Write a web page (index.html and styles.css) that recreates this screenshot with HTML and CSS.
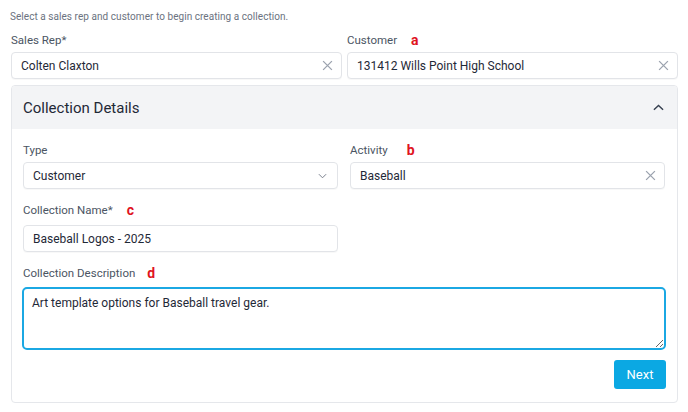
FILE: index.html
```html
<!DOCTYPE html>
<html>
<head>
<meta charset="utf-8">
<link rel="stylesheet" href="styles.css">
</head>
<body>
<div class="page">
  <p class="intro">Select a sales rep and customer to begin creating a collection.</p>
  <div class="top-row">
    <div class="field">
      <label class="label">Sales Rep*</label>
      <div class="input">
        <span class="value">Colten Claxton</span>
        <svg class="clear" viewBox="0 0 10 10" width="11" height="11"><path d="M1 1L9 9M9 1L1 9" stroke="#9ca3af" stroke-width="1.2" fill="none"/></svg>
      </div>
    </div>
    <div class="field">
      <label class="label">Customer<span class="mark mark-a">a</span></label>
      <div class="input">
        <span class="value">131412 Wills Point High School</span>
        <svg class="clear" viewBox="0 0 10 10" width="11" height="11"><path d="M1 1L9 9M9 1L1 9" stroke="#9ca3af" stroke-width="1.2" fill="none"/></svg>
      </div>
    </div>
  </div>

  <section class="panel">
    <header class="panel-head">
      <h2 class="panel-title">Collection Details</h2>
      <svg class="chev-up" viewBox="0 0 12 7" width="11" height="7"><path d="M1 6L6 1.3L11 6" stroke="#374151" stroke-width="1.6" fill="none"/></svg>
    </header>
    <div class="panel-body">
      <div class="grid">
        <div class="field">
          <label class="label">Type</label>
          <div class="input">
            <span class="value">Customer</span>
            <svg class="chev-down" viewBox="0 0 10 6" width="9" height="6"><path d="M1 1L5 5L9 1" stroke="#6b7280" stroke-width="1" fill="none"/></svg>
          </div>
        </div>
        <div class="field">
          <label class="label">Activity<span class="mark mark-b">b</span></label>
          <div class="input">
            <span class="value">Baseball</span>
            <svg class="clear" viewBox="0 0 10 10" width="11" height="11"><path d="M1 1L9 9M9 1L1 9" stroke="#9ca3af" stroke-width="1.2" fill="none"/></svg>
          </div>
        </div>
        <div class="field field-name">
          <label class="label">Collection Name*<span class="mark mark-c">c</span></label>
          <div class="input">
            <span class="value">Baseball Logos - 2025</span>
          </div>
        </div>
        <div class="field field-desc">
          <label class="label">Collection Description<span class="mark mark-d">d</span></label>
          <textarea class="textarea">Art template options for Baseball travel gear.</textarea>
        </div>
      </div>
      <div class="actions">
        <button class="btn">Next</button>
      </div>
    </div>
  </section>
</div>
</body>
</html>
```
FILE: styles.css
```css
* { box-sizing: border-box; }
html, body { margin: 0; padding: 0; background: #ffffff; }
body {
  font-family: Roboto, "Liberation Sans", sans-serif;
  color: #1f2937;
  width: 688px;
  height: 412px;
  overflow: hidden;
}
.page {
  padding: 11px 10px 0 11px;
}
.intro {
  margin: 0 0 0 -1px;
  font-size: 10px;
  letter-spacing: 0.05px;
  line-height: 12px;
  color: #6b7280;
}
.top-row {
  display: grid;
  grid-template-columns: 331px 331px;
  column-gap: 5px;
  margin-top: 10px;
}
.field {
  display: flex;
  flex-direction: column;
}
.label {
  display: flex;
  align-items: center;
  font-size: 11.5px;
  line-height: 14px;
  color: #4b5563;
  margin-bottom: 5px;
}
.mark {
  color: #e0141e;
  font-weight: 700;
  font-size: 14px;
  line-height: 14px;
}
.mark-a { margin-left: 14px; }
.mark-b { margin-left: 19px; }
.mark-c { margin-left: 14px; }
.mark-d { margin-left: 12px; }
.input {
  height: 27px;
  border: 1px solid #e2e4e8;
  border-radius: 4px;
  background: #fff;
  display: flex;
  align-items: center;
  justify-content: space-between;
  padding: 0 8px 0 9px;
  box-shadow: 0 1px 1px rgba(0,0,0,0.03);
}
.value {
  font-size: 12px;
  color: #1f2937;
}
.clear { flex: none; }
.chev-down { flex: none; margin-right: 2px; }

.panel {
  margin-top: 6px;
  width: 667px;
  height: 318px;
  border: 1px solid #e5e7eb;
  border-radius: 4px;
  overflow: hidden;
}
.panel-head {
  height: 43px;
  background: #f3f4f6;
  display: flex;
  align-items: center;
  justify-content: space-between;
  padding: 0 13px 0 11px;
}
.panel-title {
  margin: 0;
  font-size: 15px;
  font-weight: 400;
  color: #1f2937;
}
.panel-body {
  padding: 14px 11px 0 11px;
}
.grid {
  display: grid;
  grid-template-columns: 315px 315px;
  column-gap: 12px;
}
.field-name {
  grid-column: 1;
  margin-top: 14px;
}
.field-name .label { margin-bottom: 8px; }
.field-desc {
  grid-column: 1 / span 2;
  margin-top: 14px;
}
.field-desc .label { margin-bottom: 7px; }
.textarea {
  width: 644px;
  height: 63px;
  margin-left: -1px;
  border: 2px solid #1ba8e3;
  border-radius: 5px;
  padding: 7px 8px;
  font-family: Roboto, "Liberation Sans", sans-serif;
  font-size: 12px;
  color: #1f2937;
  outline: none;
  resize: vertical;
}
.actions {
  display: flex;
  justify-content: flex-end;
  margin-top: 10px;
}
.btn {
  width: 52px;
  height: 29px;
  border: none;
  border-radius: 3px;
  background: #0ba8e3;
  color: #fff;
  font-family: Roboto, "Liberation Sans", sans-serif;
  font-size: 13px;
  padding: 0;
}
```
